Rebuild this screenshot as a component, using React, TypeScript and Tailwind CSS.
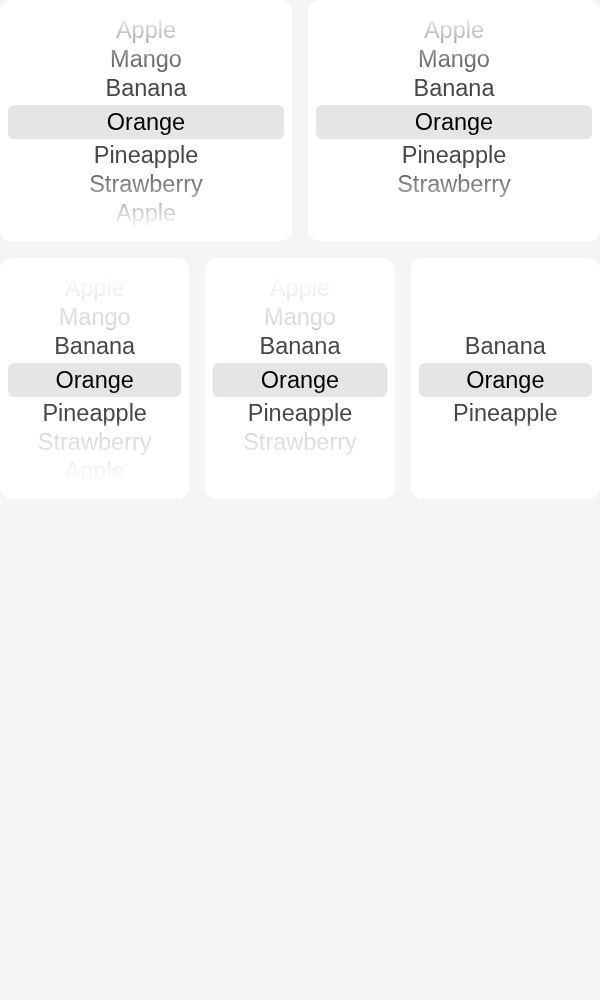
const fruits = ["Apple", "Mango", "Banana", "Orange", "Pineapple", "Strawberry"];

type Fade = "soft" | "strong";

const masks: Record<Fade, string> = {
  soft: "[mask-image:linear-gradient(to_bottom,transparent_5%,black_32%,black_68%,transparent_95%)] [-webkit-mask-image:linear-gradient(to_bottom,transparent_5%,black_32%,black_68%,transparent_95%)]",
  strong:
    "[mask-image:linear-gradient(to_bottom,transparent_6%,rgba(0,0,0,0.07)_13%,rgba(0,0,0,0.17)_22%,rgba(0,0,0,0.22)_29%,black_32%,black_68%,rgba(0,0,0,0.22)_71%,rgba(0,0,0,0.17)_78%,rgba(0,0,0,0.07)_87%,transparent_94%)] [-webkit-mask-image:linear-gradient(to_bottom,transparent_6%,rgba(0,0,0,0.07)_13%,rgba(0,0,0,0.17)_22%,rgba(0,0,0,0.22)_29%,black_32%,black_68%,rgba(0,0,0,0.22)_71%,rgba(0,0,0,0.17)_78%,rgba(0,0,0,0.07)_87%,transparent_94%)]",
};

function Wheel({
  selected = 3,
  range = 3,
  loop = true,
  fade = "soft",
}: {
  selected?: number;
  range?: number;
  loop?: boolean;
  fade?: Fade;
}) {
  const rows: { offset: number; label: string | null }[] = [];
  for (let d = -range; d <= range; d++) {
    let i = selected + d;
    if (loop) i = (i + fruits.length) % fruits.length;
    const label = i >= 0 && i < fruits.length ? fruits[i] : null;
    rows.push({ offset: d, label });
  }

  return (
    <div className="h-[241px] bg-white rounded-xl overflow-hidden">
      <div
        className={`h-full flex flex-col justify-center px-2 pt-[2px] ${masks[fade]}`}
      >
        {rows.map(({ offset, label }) =>
          offset === 0 ? (
            <div
              key={offset}
              className="h-[34px] my-[2px] rounded-md bg-[#e5e5e5] text-black text-center leading-[34px]"
            >
              {label}
            </div>
          ) : (
            <div
              key={offset}
              className="h-[29px] text-[#474747] text-center leading-[29px]"
            >
              {label ?? "\u00a0"}
            </div>
          )
        )}
      </div>
    </div>
  );
}

export default function App() {
  return (
    <div
      className="min-h-screen bg-[#f5f5f5] flex flex-col gap-[17px] text-[23.5px]"
      style={{ fontFamily: '"Liberation Sans", Arial, sans-serif' }}
    >
      <div className="grid grid-cols-2 gap-4">
        <Wheel />
        <Wheel loop={false} />
      </div>
      <div className="grid grid-cols-3 gap-4">
        <Wheel fade="strong" />
        <Wheel fade="strong" loop={false} />
        <Wheel fade="strong" range={1} />
      </div>
    </div>
  );
}
